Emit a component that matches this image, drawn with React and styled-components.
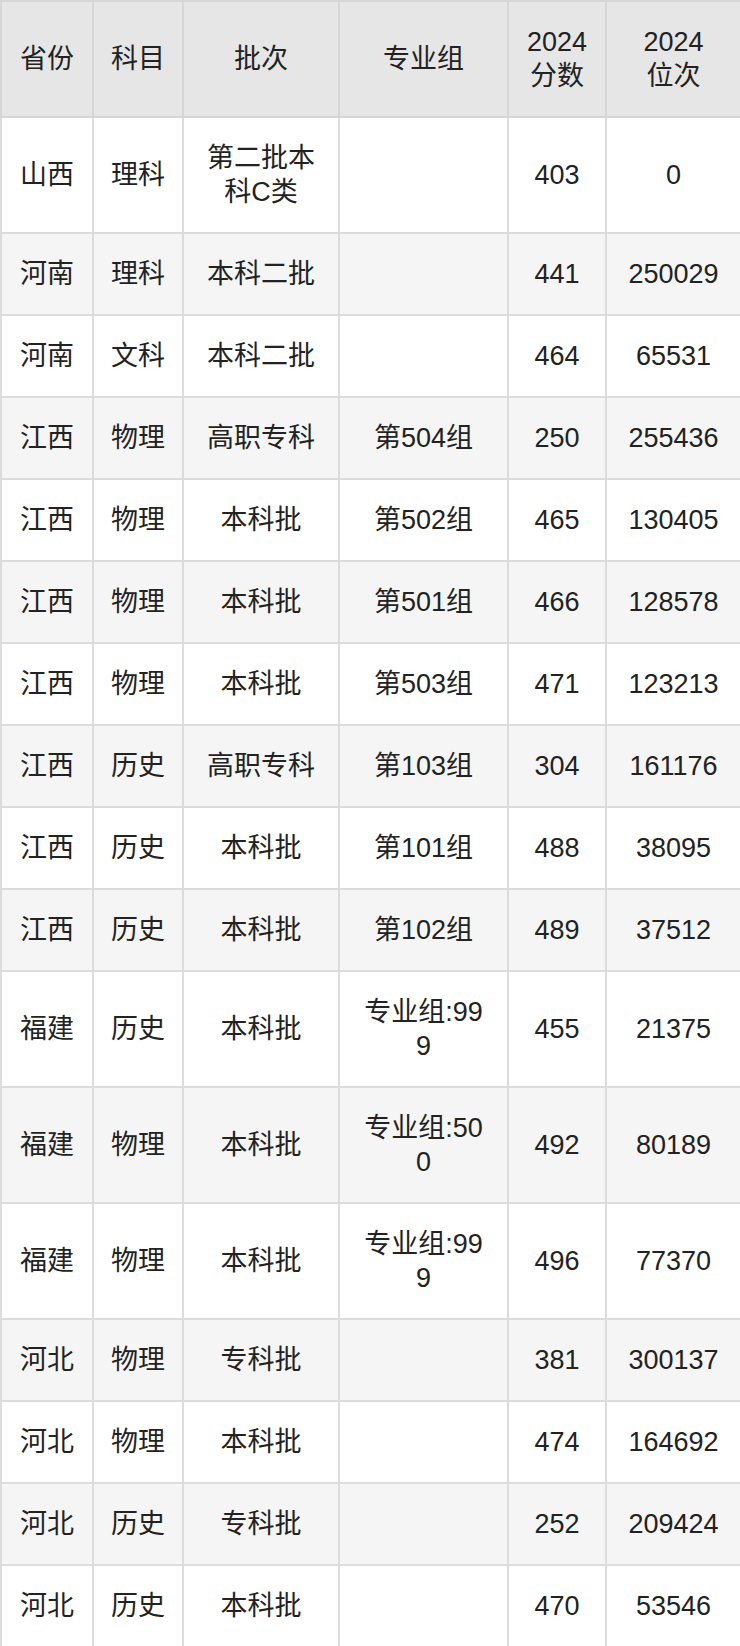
import React from 'react';
import styled, { createGlobalStyle } from 'styled-components';

const GlobalStyle = createGlobalStyle`
    html, body {
        margin: 0;
        padding: 0;
        background: #ffffff;
    }
    body {
        font-family: "Liberation Sans", "Noto Sans CJK SC", sans-serif;
        color: #222222;
    }
`;

const Table = styled.table`
    width: 740px;
    table-layout: fixed;
    border-collapse: collapse;
    border: 2px solid #dcdcdc;
    font-size: 27px;
    line-height: 34px;
`;

const HeadCell = styled.th`
    background: #e6e6e6;
    font-weight: normal;
    text-align: center;
    vertical-align: middle;
    padding: 23px 4px;
    border: 2px solid #d6d6d6;
`;

const Row = styled.tr`
    background: ${props => (props.$striped ? '#f5f5f5' : '#ffffff')};
`;

const Cell = styled.td`
    text-align: center;
    vertical-align: middle;
    padding: 23px ${props => props.$pad}px;
    border: 2px solid #dcdcdc;
    word-break: break-all;
`;

const columns = [
    { width: 92, pad: 6, label: ['省份'] },
    { width: 90, pad: 6, label: ['科目'] },
    { width: 156, pad: 20, label: ['批次'] },
    { width: 169, pad: 20, label: ['专业组'] },
    { width: 98, pad: 6, label: ['2024', '分数'] },
    { width: 135, pad: 6, label: ['2024', '位次'] },
];

const rows = [
    ['山西', '理科', '第二批本科C类', '', '403', '0'],
    ['河南', '理科', '本科二批', '', '441', '250029'],
    ['河南', '文科', '本科二批', '', '464', '65531'],
    ['江西', '物理', '高职专科', '第504组', '250', '255436'],
    ['江西', '物理', '本科批', '第502组', '465', '130405'],
    ['江西', '物理', '本科批', '第501组', '466', '128578'],
    ['江西', '物理', '本科批', '第503组', '471', '123213'],
    ['江西', '历史', '高职专科', '第103组', '304', '161176'],
    ['江西', '历史', '本科批', '第101组', '488', '38095'],
    ['江西', '历史', '本科批', '第102组', '489', '37512'],
    ['福建', '历史', '本科批', '专业组:999', '455', '21375'],
    ['福建', '物理', '本科批', '专业组:500', '492', '80189'],
    ['福建', '物理', '本科批', '专业组:999', '496', '77370'],
    ['河北', '物理', '专科批', '', '381', '300137'],
    ['河北', '物理', '本科批', '', '474', '164692'],
    ['河北', '历史', '专科批', '', '252', '209424'],
    ['河北', '历史', '本科批', '', '470', '53546'],
];

export default function App() {
    return (
        <>
            <GlobalStyle />
            <Table>
                <colgroup>
                    {columns.map((col, i) => (
                        <col key={i} style={{ width: col.width }} />
                    ))}
                </colgroup>
                <thead>
                    <tr>
                        {columns.map((col, i) => (
                            <HeadCell key={i}>
                                {col.label.map((line, j) => (
                                    <React.Fragment key={j}>
                                        {j > 0 && <br />}
                                        {line}
                                    </React.Fragment>
                                ))}
                            </HeadCell>
                        ))}
                    </tr>
                </thead>
                <tbody>
                    {rows.map((row, i) => (
                        <Row key={i} $striped={i % 2 === 1}>
                            {row.map((text, j) => (
                                <Cell key={j} $pad={columns[j].pad}>
                                    {text}
                                </Cell>
                            ))}
                        </Row>
                    ))}
                </tbody>
            </Table>
        </>
    );
}
